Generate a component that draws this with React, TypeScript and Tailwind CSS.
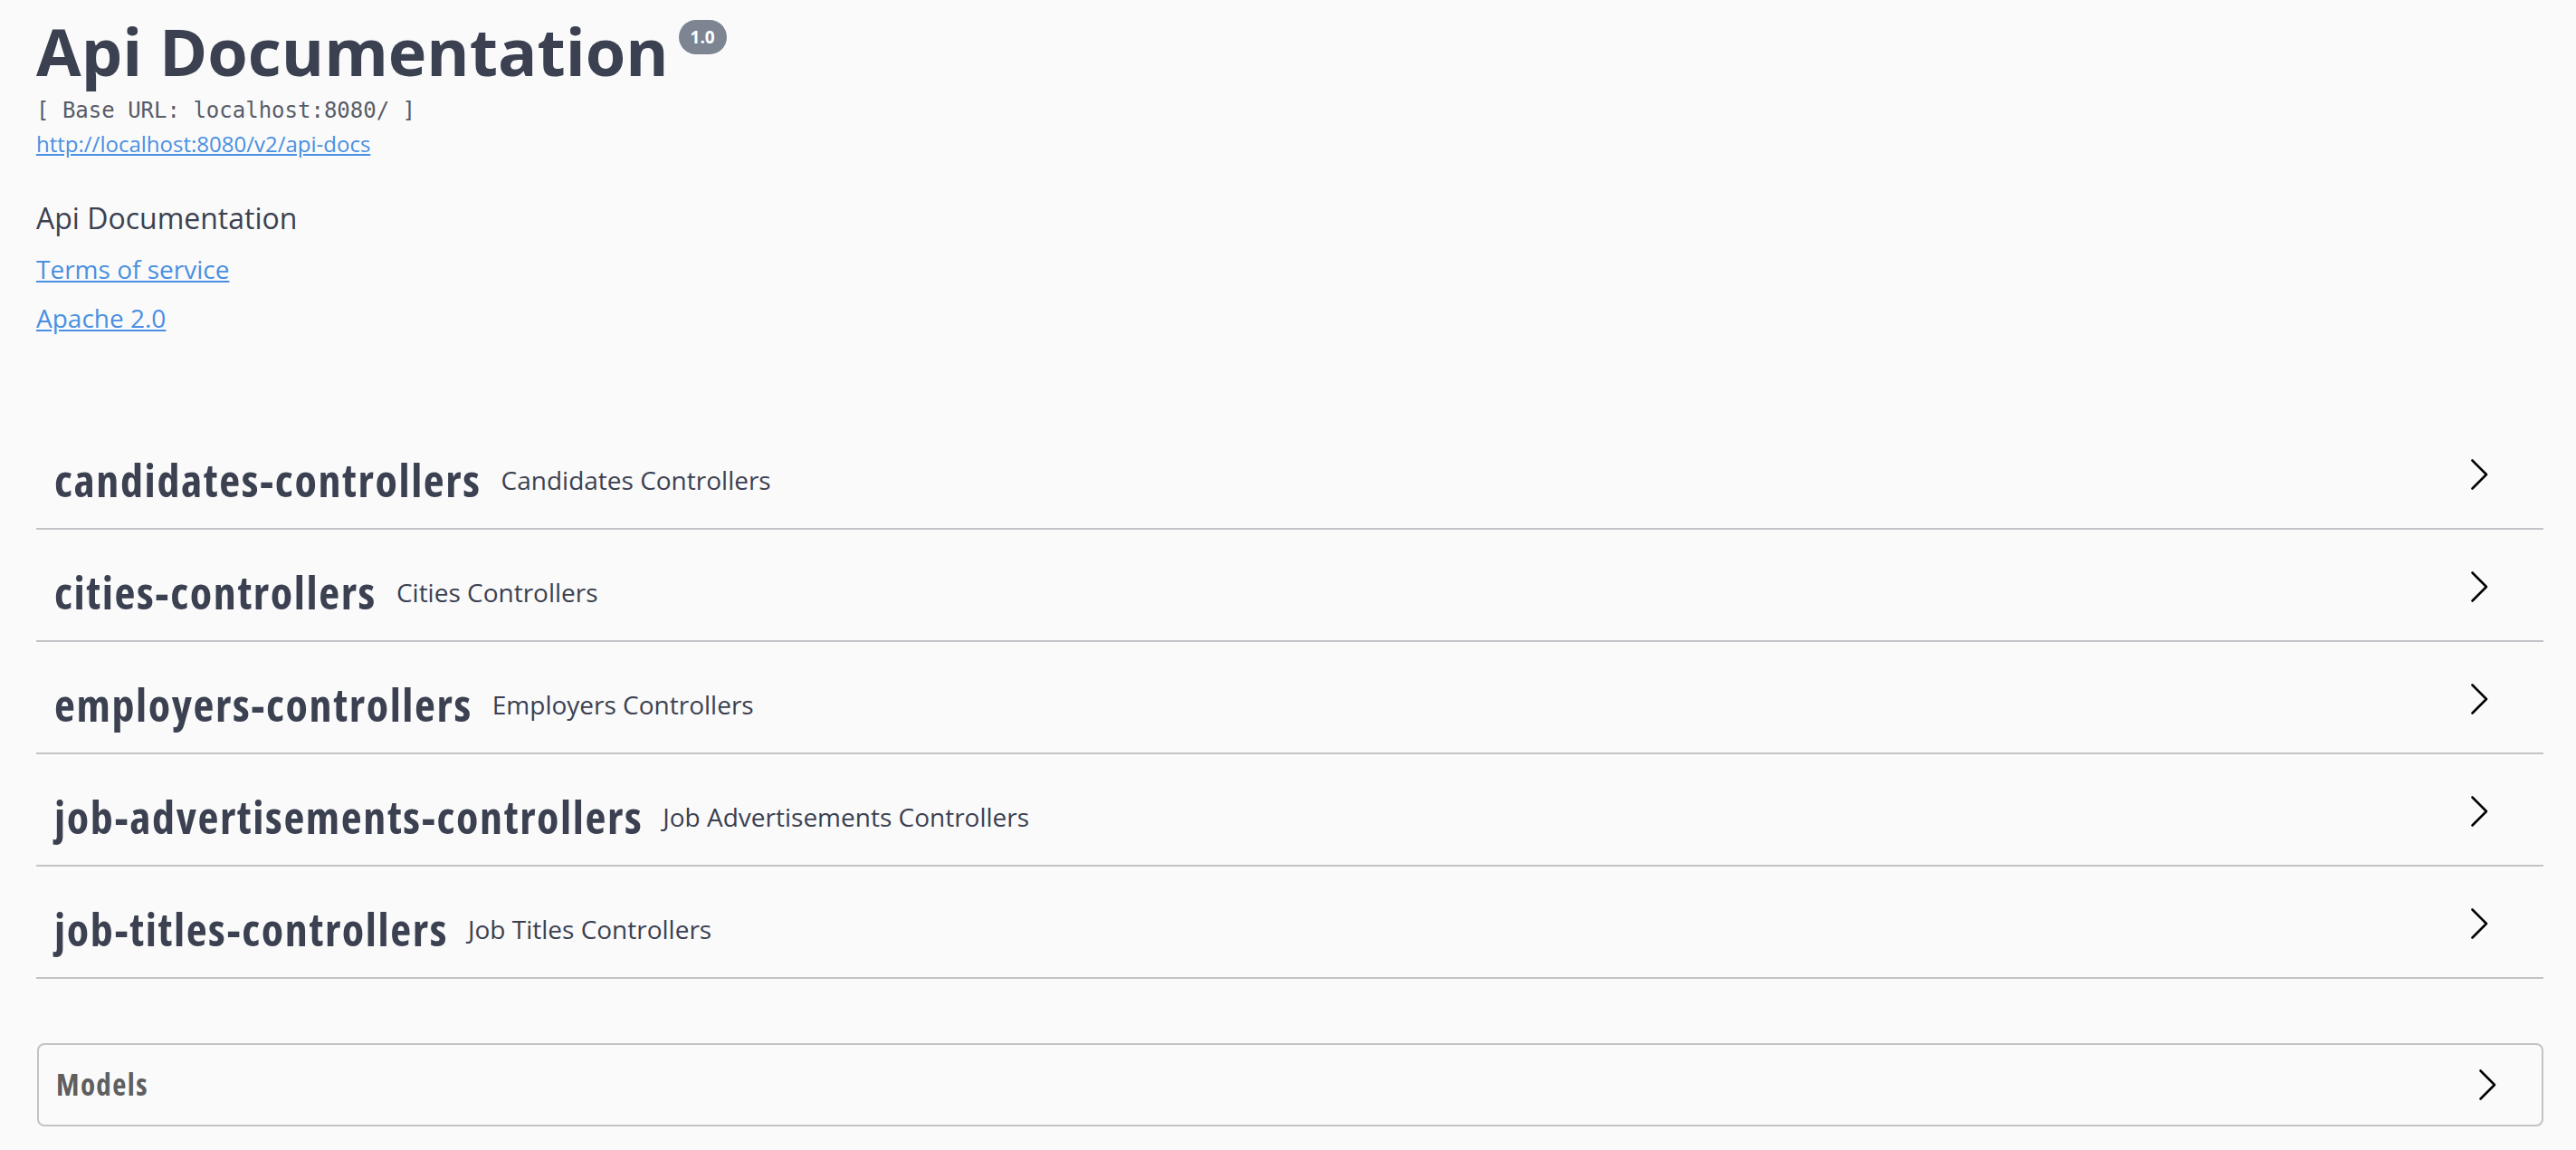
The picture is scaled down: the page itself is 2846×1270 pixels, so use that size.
import React from "react";

type Tag = {
  name: string;
  description: string;
};

const tags: Tag[] = [
  { name: "candidates-controllers", description: "Candidates Controllers" },
  { name: "cities-controllers", description: "Cities Controllers" },
  { name: "employers-controllers", description: "Employers Controllers" },
  {
    name: "job-advertisements-controllers",
    description: "Job Advertisements Controllers",
  },
  { name: "job-titles-controllers", description: "Job Titles Controllers" },
];

const Arrow: React.FC<{ className?: string }> = ({ className }) => (
  <svg
    className={className}
    width="20"
    height="36"
    viewBox="0 0 20 36"
    fill="none"
    aria-hidden="true"
  >
    <polyline
      points="2.5,2.5 18,18 2.5,33.5"
      stroke="#000"
      strokeWidth="2.6"
      strokeLinecap="round"
      strokeLinejoin="round"
    />
  </svg>
);

const TagRow: React.FC<{ tag: Tag }> = ({ tag }) => (
  <div className="flex h-[124px] cursor-pointer items-center border-b-2 border-[#c1c3c7] pl-[20px]">
    <h4 className="flex items-center gap-[22px] pt-[15px]">
      <span className="text-[50px] font-bold leading-none tracking-[1.6px] font-stretch-condensed">
        {tag.name}
      </span>
      <small className="text-[28px] leading-none">{tag.description}</small>
    </h4>
    <button className="ml-auto mr-[61px] mt-[3px] flex items-center">
      <Arrow />
    </button>
  </div>
);

export default function App() {
  return (
    <div className="min-h-screen bg-[#fafafa] font-['Open_Sans',sans-serif] text-[#3b4151]">
      <div className="pl-[40px] pr-[36px]">
        <section className="pt-[20px]">
          <div className="flex items-start">
            <h2 className="text-[72px] font-bold leading-[72px]">
              Api Documentation
            </h2>
            <span className="ml-[11px] mt-[2px] inline-flex h-[38px] items-center rounded-full bg-[#7d8492] px-[13px] text-[19px] font-bold text-white">
              1.0
            </span>
          </div>
          <pre className="mt-[16px] font-['DejaVu_Sans_Mono',monospace] text-[24px] leading-[28px] text-[#575c68]">
            [ Base URL: localhost:8080/ ]
          </pre>
          <a
            href="#"
            className="mt-[7px] block w-fit text-[24px] leading-[32px] text-[#4990e2] underline"
          >
            http://localhost:8080/v2/api-docs
          </a>
          <p className="mt-[46px] text-[32px] leading-[40px]">Api Documentation</p>
          <a
            href="#"
            className="mt-[16px] block w-fit text-[28px] leading-[40px] text-[#4990e2] underline"
          >
            Terms of service
          </a>
          <a
            href="#"
            className="mt-[14px] block w-fit text-[28px] leading-[40px] text-[#4990e2] underline"
          >
            Apache 2.0
          </a>
        </section>

        <section className="mt-[90px]">
          {tags.map((tag) => (
            <TagRow key={tag.name} tag={tag} />
          ))}
        </section>

        <section className="ml-[1px] mt-[71px] flex h-[92px] items-center rounded-[8px] border-2 border-[#c1c3c7] pl-[19px]">
          <h4 className="text-[33px] font-bold tracking-[1.4px] text-[#5f5f5f] font-stretch-condensed">
            Models
          </h4>
          <Arrow className="ml-auto mr-[50px]" />
        </section>
      </div>
    </div>
  );
}
